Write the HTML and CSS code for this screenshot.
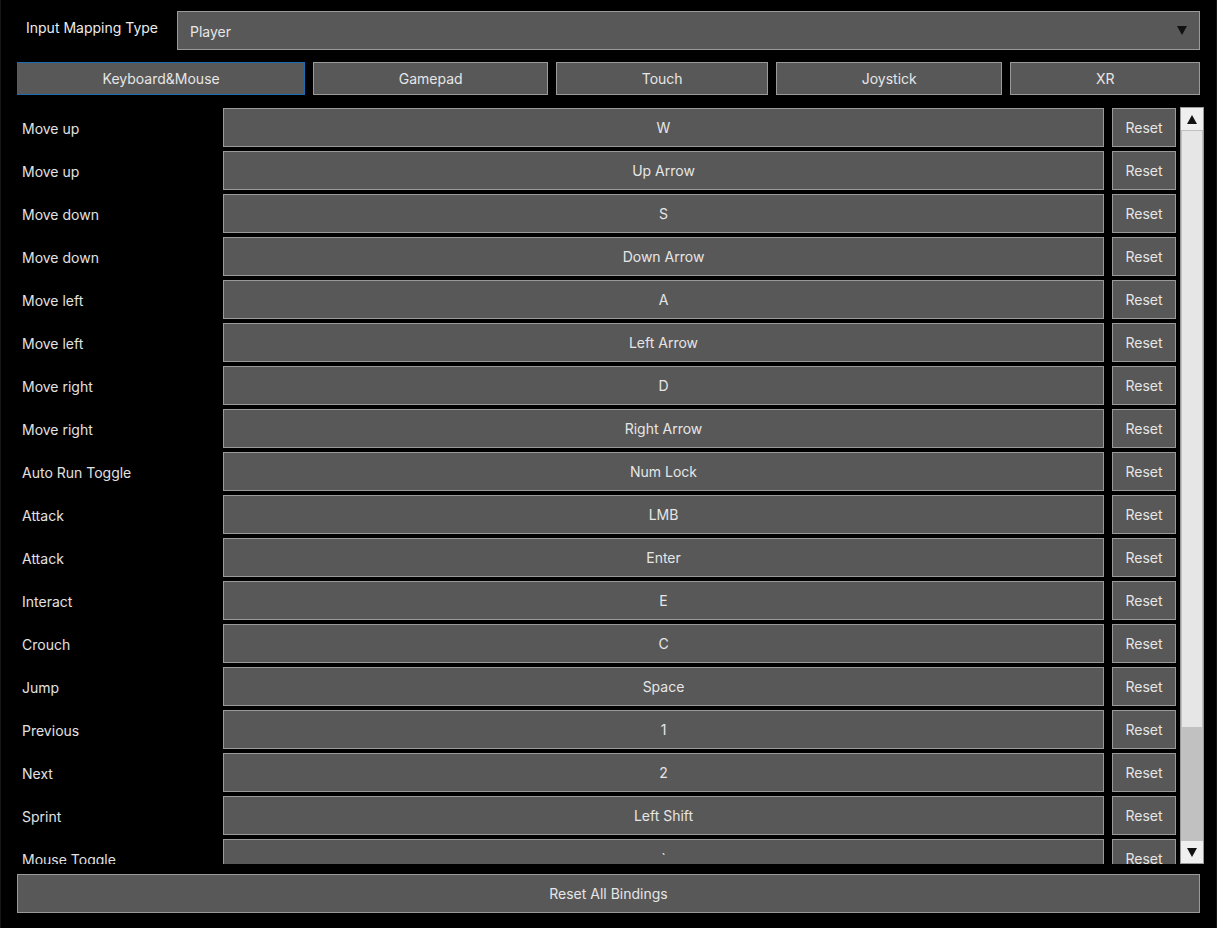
FILE: index.html
```html
<!DOCTYPE html>
<html>
<head>
<meta charset="utf-8">
<link rel="stylesheet" href="styles.css">
</head>
<body>
<div class="app">
  <div class="header">
    <div class="header-label">Input Mapping Type</div>
    <div class="dropdown">
      <span>Player</span>
      <svg class="dd-arrow" width="10" height="9" viewBox="0 0 10 9"><path d="M0 0H10L5 9Z" fill="#111"/></svg>
    </div>
  </div>
  <div class="tabs">
    <div class="btn tab active">Keyboard&amp;Mouse</div>
    <div class="btn tab">Gamepad</div>
    <div class="btn tab">Touch</div>
    <div class="btn tab">Joystick</div>
    <div class="btn tab">XR</div>
  </div>
  <div class="list-area">
    <div class="list">
      <div class="row"><div class="label">Move up</div><div class="btn">W</div><div class="btn">Reset</div></div>
      <div class="row"><div class="label">Move up</div><div class="btn">Up Arrow</div><div class="btn">Reset</div></div>
      <div class="row"><div class="label">Move down</div><div class="btn">S</div><div class="btn">Reset</div></div>
      <div class="row"><div class="label">Move down</div><div class="btn">Down Arrow</div><div class="btn">Reset</div></div>
      <div class="row"><div class="label">Move left</div><div class="btn">A</div><div class="btn">Reset</div></div>
      <div class="row"><div class="label">Move left</div><div class="btn">Left Arrow</div><div class="btn">Reset</div></div>
      <div class="row"><div class="label">Move right</div><div class="btn">D</div><div class="btn">Reset</div></div>
      <div class="row"><div class="label">Move right</div><div class="btn">Right Arrow</div><div class="btn">Reset</div></div>
      <div class="row"><div class="label">Auto Run Toggle</div><div class="btn">Num Lock</div><div class="btn">Reset</div></div>
      <div class="row"><div class="label">Attack</div><div class="btn">LMB</div><div class="btn">Reset</div></div>
      <div class="row"><div class="label">Attack</div><div class="btn">Enter</div><div class="btn">Reset</div></div>
      <div class="row"><div class="label">Interact</div><div class="btn">E</div><div class="btn">Reset</div></div>
      <div class="row"><div class="label">Crouch</div><div class="btn">C</div><div class="btn">Reset</div></div>
      <div class="row"><div class="label">Jump</div><div class="btn">Space</div><div class="btn">Reset</div></div>
      <div class="row"><div class="label">Previous</div><div class="btn">1</div><div class="btn">Reset</div></div>
      <div class="row"><div class="label">Next</div><div class="btn">2</div><div class="btn">Reset</div></div>
      <div class="row"><div class="label">Sprint</div><div class="btn">Left Shift</div><div class="btn">Reset</div></div>
      <div class="row"><div class="label">Mouse Toggle</div><div class="btn">`</div><div class="btn">Reset</div></div>
    </div>
    <div class="scrollbar">
      <div class="sb-btn"><svg width="10" height="9" viewBox="0 0 10 9"><path d="M5 0L10 9H0Z" fill="#111"/></svg></div>
      <div class="sb-track"><div class="sb-thumb"></div></div>
      <div class="sb-btn"><svg width="10" height="9" viewBox="0 0 10 9"><path d="M0 0H10L5 9Z" fill="#111"/></svg></div>
    </div>
  </div>
  <div class="btn reset-all">Reset All Bindings</div>
</div>
</body>
</html>
```
FILE: styles.css
```css
html, body {
  margin: 0;
  padding: 0;
  background: #000;
}
body {
  font-family: Inter, "Noto Sans", "Liberation Sans", sans-serif;
  font-size: 14px;
  color: #e2e2e2;
}
.app {
  box-sizing: border-box;
  width: 1217px;
  height: 928px;
  padding: 11px 12px 15px 16px;
  border-left: 1px solid #161616;
  border-right: 1px solid #161616;
  display: flex;
  flex-direction: column;
}
.header {
  display: flex;
  height: 39px;
  margin-right: 4px;
}
.header-label {
  width: 151px;
  padding-left: 9px;
  padding-top: 8px;
  line-height: 17px;
  color: #ececec;
}
.dropdown {
  flex: 1;
  display: flex;
  align-items: center;
  justify-content: space-between;
  background: #585858;
  border: 1px solid #9a9a9a;
  padding: 0 12px 0 12px;
  color: #e6e6e6;
  box-sizing: border-box;
}
.dropdown span {
  padding-top: 1px;
}
.btn {
  box-sizing: border-box;
  background: #585858;
  border: 1px solid #9a9a9a;
  display: flex;
  align-items: center;
  justify-content: center;
  color: #e6e6e6;
  white-space: nowrap;
}
.tabs {
  display: flex;
  gap: 8px;
  height: 33px;
  margin-top: 12px;
  margin-right: 4px;
}
.tab {
  flex: 1 1 auto;
}
.tab.active {
  border-color: #1c6bb5;
}
.list-area {
  display: flex;
  gap: 4px;
  height: 757px;
  margin-top: 12px;
}
.list {
  flex: 1;
  overflow: hidden;
  padding-top: 1px;
  display: flex;
  flex-direction: column;
  gap: 4px;
}
.row {
  display: grid;
  grid-template-columns: 198px 1fr 64px;
  column-gap: 8px;
  height: 39px;
  flex: none;
}
.label {
  display: flex;
  align-items: center;
  padding-left: 5px;
  padding-top: 1px;
  color: #e2e2e2;
}
.scrollbar {
  width: 24px;
  box-sizing: border-box;
  border: 1px solid #9a9a9a;
  background: #c1c1c1;
  display: flex;
  flex-direction: column;
}
.sb-btn {
  height: 22px;
  background: #efefef;
  display: flex;
  align-items: center;
  justify-content: center;
  flex: none;
}
.sb-track {
  flex: 1;
  padding: 1px 1px 0 1px;
}
.sb-thumb {
  height: 596px;
  background: #e6e6e6;
}
.reset-all {
  height: 39px;
  margin-top: 10px;
  margin-right: 4px;
}
```
